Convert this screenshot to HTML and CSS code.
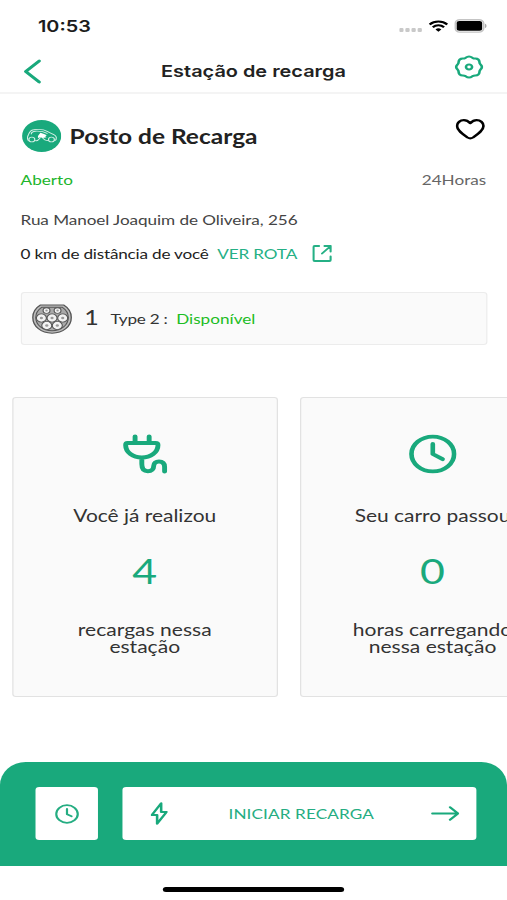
FILE: index.html
```html
<!DOCTYPE html>
<html lang="pt-BR">
<head>
<meta charset="utf-8">
<title>Estação de recarga</title>
<link rel="stylesheet" href="styles.css">
</head>
<body>
<div class="screen">
  <div class="status">
    <span class="time">10:53</span>
    <svg class="signal" width="19" height="4" viewBox="0 0 19 4" fill="#c9c9c9"><rect x="0" y="0" width="3.5" height="4" rx="1"/><rect x="5" y="0" width="3.5" height="4" rx="1"/><rect x="10" y="0" width="3.5" height="4" rx="1"/><rect x="15" y="0" width="3.5" height="4" rx="1"/></svg>
    <svg class="wifi" width="16" height="12" viewBox="0 0 16 12" fill="none" stroke="#000" stroke-width="2"><path d="M.8 4.5a10.2 10.2 0 0 1 14.4 0M3.4 7.2a6.5 6.5 0 0 1 9.2 0"/><path d="M8 11.8 5.6 9.4a3.4 3.4 0 0 1 4.8 0z" fill="#000" stroke="none"/></svg>
    <svg class="battery" width="27" height="14" viewBox="0 0 27 14"><rect x=".7" y=".7" width="23.2" height="12.4" rx="3.8" fill="#fff" stroke="#c4c4c4" stroke-width="1.4"/><rect x="1.9" y="2.1" width="20.8" height="9.6" rx="2.2"/><path d="M25 4.8c1.7.7 1.7 3.6 0 4.3z" fill="#aaa"/></svg>
  </div>
  <header class="nav">
    <svg class="back" width="15" height="25" viewBox="0 0 15 25" fill="none" stroke="#19a97c" stroke-width="2.8" stroke-linecap="round" stroke-linejoin="round"><path d="M13 2 2 12.5 13 23"/></svg>
    <h1>Estação de recarga</h1>
    <svg class="gear" width="24" height="24" viewBox="0 0 24 24" fill="none" stroke="#19a97c" stroke-width="2.1" stroke-linejoin="round"><path d="M9.2 2.8Q12 .2 14.8 2.8Q15.9 3.6 17.2 3.5Q20.3 3.7 20.5 6.8Q20.4 8.1 21.2 9.2Q23.8 12 21.2 14.8Q20.4 15.9 20.5 17.2Q20.3 20.3 17.2 20.5Q15.9 20.4 14.8 21.2Q12 23.8 9.2 21.2Q8.1 20.4 6.8 20.5Q3.7 20.3 3.5 17.2Q3.6 15.9 2.8 14.8Q.2 12 2.8 9.2Q3.6 8.1 3.5 6.8Q3.7 3.7 6.8 3.5Q8.1 3.6 9.2 2.8Z"/><circle cx="12" cy="12" r="2.5"/></svg>
  </header>
  <section class="station">
    <div class="name-row">
      <svg class="logo" width="32" height="32" viewBox="0 0 32 32" fill="none"><circle cx="16" cy="16" r="16" fill="#19a97c"/><g stroke="#d5efe6" stroke-width=".9" stroke-linecap="round" stroke-linejoin="round"><path d="M5.2 20.7C4 18.7 4.2 17 5.2 14.7C6.2 11.5 7 10 9.4 9.7C14 9 18 9.4 21 11.7C23.5 13.7 27.5 14 28 17.5C28.2 19.2 27.8 20 26.7 20.6M10.8 20.7C13 21.5 13.5 19 15 17.7M17 18.3C18.5 20.6 19.8 20.8 21.2 20.5M7.5 14C7.7 12 9 11.3 11 11.2C15 11 18 11.7 20.5 13.4"/><circle cx="8" cy="19.5" r="2.4"/><circle cx="24" cy="19.5" r="2.4"/></g><path d="m13 16 2-3.2 3 1.1 2.2 1.3-1.3 1.1 1.2 1-3.3.8-1.9-.8-1.9.7z" fill="#fff"/></svg>
      <h2>Posto de Recarga</h2>
      <svg class="heart" width="24" height="21" viewBox="0 0 24 21" fill="none" stroke="#000" stroke-width="2.2" stroke-linejoin="round"><path d="M12 4.2C10 1.7 8.6 1.2 6.8 1.2C3.6 1.2 1.2 3.7 1.2 7.1C1.2 11.7 6 15.4 9.8 18.5C11.5 19.8 12.5 19.8 14.2 18.5C18 15.4 22.8 11.7 22.8 7.1C22.8 3.7 20.4 1.2 17.2 1.2C15.4 1.2 14 1.7 12 4.2Z"/></svg>
    </div>
    <div class="hours"><span class="open">Aberto</span><span class="all-day">24Horas</span></div>
    <p class="address">Rua Manoel Joaquim de Oliveira, 256</p>
    <div class="distance">
      <span class="km">0 km de distância de você</span>
      <a class="route">VER ROTA</a>
      <svg width="16" height="17" viewBox="0 0 16 17" fill="none" stroke="#25b085" stroke-width="1.8" stroke-linecap="round" stroke-linejoin="round"><path d="M5.5 1H2a1 1 0 0 0-1 1v13a1 1 0 0 0 1 1h12a1 1 0 0 0 1-1v-3.5M10 1H15v5.5M15 1 8 8.5"/></svg>
    </div>
    <div class="connector">
      <svg width="33" height="30" viewBox="0 0 33 30" fill="none" stroke="#555"><path d="M7 1H26C30 4 32.2 8.5 32.2 13.5C32.2 22.5 25.4 29.2 16.5 29.2S.8 22.5.8 13.5C.8 8.5 3 4 7 1Z" fill="#bbb" stroke-width="1.1"/><path d="M8 3.3H25C28.3 6 29.8 9.5 29.8 13.5C29.8 21 24 26.7 16.5 26.7S3.2 21 3.2 13.5C3.2 9.5 4.7 6 8 3.3Z" fill="#aaa" stroke-width=".9"/><g fill="#f2f2f2" stroke="#555" stroke-width=".9"><circle cx="12" cy="6.6" r="2.8"/><circle cx="21" cy="6.6" r="2.8"/><circle cx="7.8" cy="14" r="4.1"/><circle cx="16.5" cy="14" r="4.1"/><circle cx="25.2" cy="14" r="4.1"/><circle cx="12.2" cy="21.5" r="4.1"/><circle cx="20.8" cy="21.5" r="4.1"/></g><g fill="#999" stroke="none"><circle cx="12" cy="6.6" r="1"/><circle cx="21" cy="6.6" r="1"/><circle cx="7.8" cy="14" r="1.3"/><circle cx="16.5" cy="14" r="1.3"/><circle cx="25.2" cy="14" r="1.3"/><circle cx="12.2" cy="21.5" r="1.3"/><circle cx="20.8" cy="21.5" r="1.3"/></g></svg>
      <span class="count">1</span><span class="type">Type 2 :</span><span class="free">Disponível</span>
    </div>
  </section>
  <section class="stats">
    <article class="stat">
      <svg width="40" height="40" viewBox="0 0 40 40" fill="none" stroke="#19a97c" stroke-width="4" stroke-linecap="round" stroke-linejoin="round"><path d="M12.3 2.5V8M23.8 2.5V8M6 9H29C30.5 9 31 9.7 31 11C31 18.5 25 23.5 17.8 23.5S4.6 18.5 4.6 11C4.6 9.7 4.8 9 6 9ZM17.8 24V30C17.8 34.5 19.5 37.2 22.7 37.2S27.5 35 27.5 32C27.5 29.3 29.2 27.5 31.8 27.5C35 27.5 36.4 29.6 36.4 33V37.5"/></svg>
      <p class="lead">Você já realizou</p>
      <strong>4</strong>
      <p class="tail">recargas nessa<br>estação</p>
    </article>
    <article class="stat">
      <svg width="40" height="40" viewBox="0 0 40 40" fill="none" stroke="#19a97c" stroke-width="3.8" stroke-linecap="round" stroke-linejoin="round"><circle cx="20.4" cy="20" r="17.4"/><path d="M20.4 10V20l8 5.2"/></svg>
      <p class="lead">Seu carro passou</p>
      <strong>0</strong>
      <p class="tail">horas carregando<br>nessa estação</p>
    </article>
  </section>
  <footer class="actions">
    <button class="history"><svg width="20" height="20" viewBox="0 0 20 20" fill="none" stroke="#25ad82" stroke-width="1.8" stroke-linecap="round" stroke-linejoin="round"><circle cx="9.7" cy="10" r="8.8"/><path d="M9.7 5v5.2l3.7 2.1"/></svg></button>
    <button class="start">
      <svg width="14" height="23" viewBox="0 0 14 23" fill="none" stroke="#19a97c" stroke-width="2.1" stroke-linejoin="round"><path d="M8.6 1.3 1 13H5.3V21.7L13 10H8.6Z"/></svg>
      <span>INICIAR RECARGA</span>
      <svg width="23" height="15" viewBox="0 0 23 15" fill="none" stroke="#19a97c" stroke-width="2" stroke-linecap="round" stroke-linejoin="round"><path d="M1 7.5H22M15.5 1.3 22 7.5 15.5 13.7"/></svg>
    </button>
  </footer>
  <div class="home"></div>
</div>
</body>
</html>
```
FILE: styles.css
```css
* { box-sizing: border-box; margin: 0; padding: 0; }
html, body { width: 507px; height: 900px; overflow: hidden; background: #fff; }
/* The 414-unit phone layout is widened to fill the window. */
.screen {
  width: 414px;
  height: 900px;
  display: flex;
  flex-direction: column;
  overflow: hidden;
  transform: scaleX(1.22464);
  transform-origin: 0 0;
  font-family: Lato, "Liberation Sans", sans-serif;
  color: #333;
  background: #fff;
}
svg { display: block; flex: none; }
.status { height: 50px; display: flex; align-items: center; padding: 2px 17px 0 31px; }
.time { flex: 1; font: 600 16.2px/20px Inter, sans-serif; color: #1c1c1c; }
.signal { margin: 7px 5px 0 0; }
.wifi { margin-right: 5px; }
.battery { margin-right: -.5px; }
.nav { height: 44px; display: flex; align-items: center; justify-content: space-between; padding: 0 19px; border-bottom: 2px solid #f4f4f4; }
.nav h1 { margin-top: -1px; font: 600 16.25px/22px Inter, sans-serif; color: #222; }
.back { margin-right: 9px; }
.gear { margin-top: -8px; }
.station { padding: 26px 16px 0 16.8px; }
.name-row { display: flex; align-items: center; height: 32px; padding-left: 1px; }
.name-row h2 { flex: 1; margin: 0 0 0 7px; font-size: 20px; line-height: 24px; font-weight: 700; color: #222; }
.heart { margin: -14px 2px 0 0; }
.hours { display: flex; justify-content: space-between; margin-top: 18px; padding-right: 1px; font-size: 14px; line-height: 20px; }
.open { color: #20b52c; }
.all-day { color: #666; }
.address { margin-top: 20px; font-size: 14px; line-height: 20px; letter-spacing: -.06px; color: #444; }
.distance { display: flex; align-items: center; height: 20px; margin-top: 13.5px; font-size: 14px; }
.km { letter-spacing: -.17px; color: #222; }
.route { color: #25b085; letter-spacing: -.1px; margin: 0 12px 0 7px; }
.connector { display: flex; align-items: center; height: 53px; margin-top: 28.5px; padding-left: 8px; border: 1.5px solid #ececec; border-radius: 3px; background: #fafafa; }
.count { margin: -3px 0 0 10px; font-size: 20.5px; color: #333; }
.type { margin-left: 9.5px; font-size: 14px; letter-spacing: -.2px; }
.free { margin-left: 7px; font-size: 14px; color: #1cbd24; }
.stats { display: flex; gap: 18px; margin-top: 52px; padding-left: 9.7px; }
.stat { flex: 0 0 217px; height: 300px; display: flex; flex-direction: column; align-items: center; padding-top: 36px; text-align: center; border: 1.5px solid #e2e2e2; border-radius: 3px; background: #fafafa; }
.lead { margin-top: 31px; font-size: 17.1px; line-height: 22px; }
.stat strong { margin-top: 22px; font-size: 35px; line-height: 42px; font-weight: 400; color: #19a97c; }
.tail { margin-top: 30px; font-size: 17.2px; line-height: 17px; white-space: nowrap; }
.actions { display: flex; height: 104px; margin-top: 65px; padding: 25px 25px 0 29px; gap: 19.5px; background: #19a97c; border-radius: 21px 21px 0 0 / 23px 23px 0 0; }
.actions button { height: 53px; display: flex; align-items: center; border: 0; border-radius: 3px; background: #fff; font-family: inherit; color: #25ad82; }
.history { width: 51px; justify-content: center; }
.start { flex: 1; padding: 0 14px 0 23.5px; justify-content: space-between; font-size: 14px; }
.start span { margin-left: 3px; letter-spacing: .1px; }
.home { width: 148px; height: 5px; margin: 21px auto 0; border-radius: 3px; background: #000; }
```
